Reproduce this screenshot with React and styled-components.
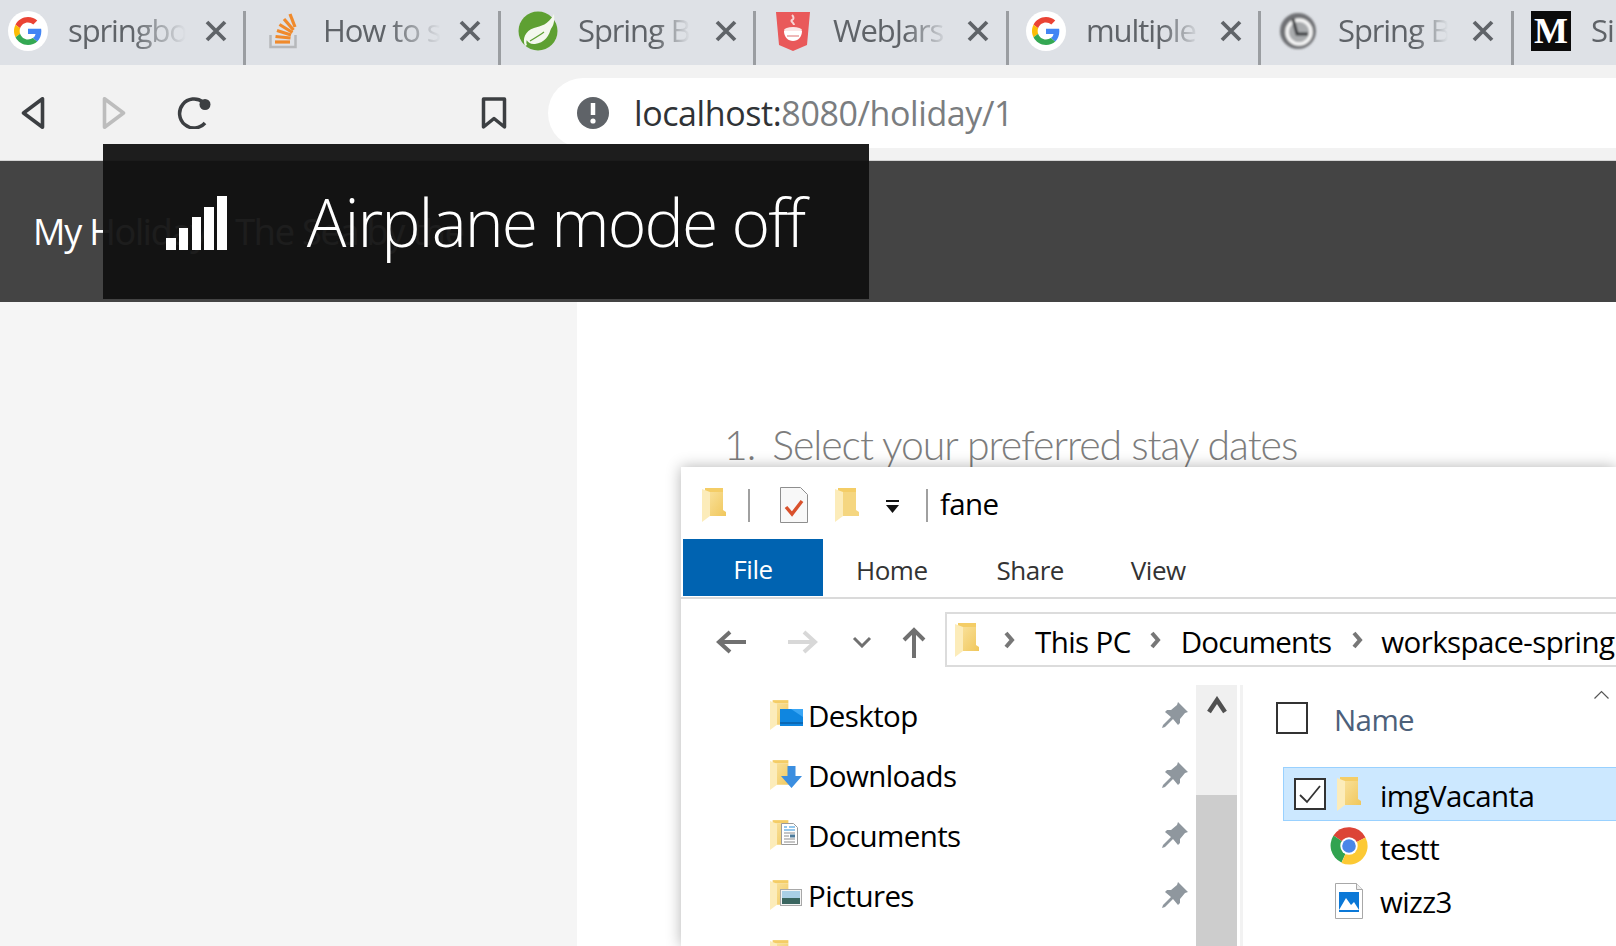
import React from 'react'
import styled, { createGlobalStyle } from 'styled-components'

const Global = createGlobalStyle`
  html, body { margin: 0; padding: 0; background: #fff; }
  body { font-family: "Open Sans", "Liberation Sans", sans-serif; }
  * { box-sizing: border-box; }
`

const Page = styled.div`
  position: relative;
  width: 1616px;
  height: 946px;
  overflow: hidden;
`

/* browser chrome */
const TabStrip = styled.div`
  display: flex;
  height: 65px;
  padding-top: 11px;
  background: #dee1e6;
  overflow: hidden;
`

const Tab = styled.div`
  flex: none;
  display: flex;
  align-items: flex-start;
  width: ${p => p.$w}px;
  padding-left: ${p => p.$pad}px;
  border-right: ${p => (p.$last ? 'none' : '3px solid #9a9da1')};
`

const Favicon = styled.div`
  flex: none;
  width: 40px;
  height: 40px;
  display: flex;
  align-items: center;
  justify-content: center;
`

const TabTitle = styled.div`
  flex: none;
  width: 122px;
  margin-left: 20px;
  margin-top: -1px;
  font-size: 31px;
  line-height: 40px;
  letter-spacing: -1.1px;
  color: #5f6368;
  white-space: nowrap;
  overflow: hidden;
  -webkit-mask-image: linear-gradient(to right, #000 ${p => p.$fade}px, transparent ${p => p.$end}px);
  mask-image: linear-gradient(to right, #000 ${p => p.$fade}px, transparent ${p => p.$end}px);
`

const CloseIcon = styled.svg`
  flex: none;
  width: 22px;
  height: 22px;
  margin-top: 9px;
  margin-left: ${p => p.$ml}px;
`

const MediumMark = styled.div`
  width: 40px;
  height: 40px;
  background: #0b0b0b;
  color: #fff;
  font-family: "Liberation Serif", serif;
  font-weight: 700;
  font-size: 36px;
  line-height: 40px;
  text-align: center;
`

const Toolbar = styled.div`
  display: flex;
  align-items: center;
  height: 95px;
  padding: 13px 0 12px 21px;
  background: #f2f2f2;
`

const ToolIcon = styled.svg`
  flex: none;
  height: 32px;
  width: ${p => p.$w}px;
  margin-left: ${p => p.$ml || 0}px;
`

const AddressBar = styled.div`
  flex: 1;
  display: flex;
  align-items: center;
  height: 70px;
  margin-left: 41px;
  padding-left: 29px;
  background: #fff;
  border-radius: 35px 0 0 35px;
`

const Url = styled.div`
  margin-left: 25px;
  font-size: 34px;
  letter-spacing: -0.4px;
  color: #7a7d80;
  white-space: nowrap;
  span { color: #303336; }
`

/* site behind */
const SiteHeader = styled.div`
  display: flex;
  align-items: center;
  height: 142px;
  padding-left: 33px;
  background: #444;
  border-top: 1px solid #d4d4d4;
`

const Brand = styled.div`
  font-size: 36px;
  font-weight: 500;
  letter-spacing: -1.2px;
  color: #fff;
  white-space: nowrap;
`

const BrandTag = styled.span`
  margin-left: 28px;
`

const Body = styled.div`
  display: flex;
  height: 644px;
`

const Sidebar = styled.div`
  width: 577px;
  background: #f5f5f5;
`

const Content = styled.div`
  flex: 1;
  padding: 118px 0 0 147px;
`

const StepTitle = styled.h2`
  display: flex;
  gap: 17px;
  margin: 0;
  font-family: Lato, sans-serif;
  font-weight: 300;
  font-size: 41px;
  line-height: 50px;
  letter-spacing: -1.05px;
  color: #7d7d7d;
  white-space: nowrap;
`

/* airplane toast */
const Toast = styled.div`
  position: absolute;
  left: 103px;
  top: 144px;
  width: 766px;
  height: 155px;
  display: flex;
  align-items: center;
  padding-left: 63px;
  background: rgba(17, 17, 17, 0.948);
`

const SignalBars = styled.div`
  display: flex;
  align-items: flex-end;
  gap: 3.3px;
  height: 54px;
  margin-top: 3px;
`

const Bar = styled.div`
  width: 9.5px;
  height: ${p => p.$h}px;
  background: #fff;
`

const ToastText = styled.div`
  margin-left: 80px;
  margin-top: -2px;
  font-weight: 300;
  font-size: 66px;
  letter-spacing: -1.9px;
  color: #fff;
  white-space: nowrap;
`

/* explorer window */
const Explorer = styled.div`
  position: absolute;
  left: 681px;
  top: 467px;
  right: 0;
  bottom: 0;
  background: #fff;
  box-shadow: 0 0 14px rgba(0, 0, 0, 0.3);
  overflow: hidden;
  font-size: 29.5px;
  letter-spacing: -0.6px;
  color: #000;
`

const TitleBar = styled.div`
  display: flex;
  align-items: center;
  height: 72px;
  padding: 4px 0 0 21px;
`

const TitleSep = styled.div`
  flex: none;
  width: 2px;
  height: 33px;
  margin-left: ${p => p.$ml}px;
  background: #a0a0a0;
`

const TitleGlyph = styled.svg`
  flex: none;
  margin-left: ${p => p.$ml || 0}px;
  margin-top: ${p => p.$mt || 0}px;
`

const WindowName = styled.div`
  margin-left: 12px;
  margin-top: -3px;
`

const RibbonTabs = styled.div`
  display: flex;
  height: 60px;
  padding-left: 2px;
  border-bottom: 2px solid #dadada;
`

const FileTab = styled.div`
  width: 140px;
  height: 57px;
  background: #0063b1;
  color: #fff;
  font-size: 26px;
  letter-spacing: -0.4px;
  line-height: 61px;
  text-align: center;
`

const RibbonTab = styled.div`
  margin-left: ${p => p.$ml}px;
  font-size: 26px;
  letter-spacing: -0.5px;
  line-height: 62px;
  color: #333;
`

const NavBar = styled.div`
  display: flex;
  align-items: center;
  height: 68px;
  padding: 13px 0 0 35px;
`

const ArrowGroup = styled.div`
  flex: none;
  display: flex;
  align-items: center;
  padding-top: 5px;
`

const NavIcon = styled.svg`
  flex: none;
  margin-left: ${p => p.$ml || 0}px;
`

const PathBox = styled.div`
  flex: 1;
  display: flex;
  align-items: center;
  height: 55px;
  margin-left: 19px;
  padding-left: 8px;
  border: 2px solid #dcdcdc;
  border-right: none;
  white-space: nowrap;
`

const Crumb = styled.span`
  margin-left: ${p => p.$ml}px;
  padding-top: 4px;
  letter-spacing: ${p => p.$ls || -0.6}px;
`

const Panes = styled.div`
  display: flex;
  height: 300px;
  margin-top: 18px;
`

const NavPane = styled.div`
  flex: none;
  width: 515px;
  padding-left: 89px;
`

const NavRow = styled.div`
  display: flex;
  align-items: center;
  height: 60px;
  position: relative;
`

const NavLabel = styled.div`
  flex: 1;
  margin-left: 17px;
`

const PinIcon = styled.svg`
  flex: none;
  margin-right: 8px;
`

const Badge = styled.div`
  position: absolute;
  left: ${p => p.$x}px;
  top: ${p => p.$y}px;
  display: flex;
`

const ScrollTrack = styled.div`
  flex: none;
  width: 41px;
  background: #f0f0f0;
  display: flex;
  flex-direction: column;
`

const ScrollUp = styled.div`
  height: 110px;
  display: flex;
  justify-content: center;
  padding-top: 11px;
`

const ScrollThumb = styled.div`
  flex: 1;
  background: #cdcdcd;
`

const Divider = styled.div`
  flex: none;
  width: 3px;
  margin-left: 3px;
  background: #f2f2f2;
`

const FilePane = styled.div`
  flex: 1;
  position: relative;
  padding-top: 17px;
`

const Check = styled.div`
  flex: none;
  display: flex;
  align-items: center;
  justify-content: center;
  width: 32px;
  height: 32px;
  background: #fff;
  border: 2px solid #333;
`

const ListHeader = styled.div`
  display: flex;
  align-items: center;
  height: 32px;
  padding-left: 33px;
`

const HeaderLabel = styled.div`
  margin-left: 26px;
  margin-top: 2px;
  color: #4c607a;
`

const SortCaret = styled.svg`
  position: absolute;
  right: 7px;
  top: 5px;
`

const FileRow = styled.div`
  display: flex;
  align-items: center;
  height: ${p => (p.$selected ? 54 : 53)}px;
  margin-left: 40px;
  padding-left: 10px;
  margin-top: ${p => (p.$selected ? 33 : 0)}px;
  background: ${p => (p.$selected ? '#cce8ff' : 'transparent')};
  border: 1px solid ${p => (p.$selected ? '#99d1ff' : 'transparent')};
  border-right: none;
`

const FileIcon = styled.div`
  flex: none;
  width: 38px;
  margin-left: ${p => p.$ml}px;
  margin-top: ${p => p.$mt || 0}px;
  display: flex;
  justify-content: center;
`

const FileLabel = styled.div`
  margin-left: 12px;
  margin-top: 2px;
`

const GoogleG = () => (
  <svg width="40" height="40" viewBox="0 0 40 40">
    <circle cx="20" cy="20" r="20" fill="#fff" />
    <g transform="translate(6 6) scale(0.583)">
      <path fill="#EA4335" d="M24 9.5c3.5 0 6.7 1.3 9.1 3.5l6.8-6.8C35.8 2.400 30.300 0 24 0 14.600 0 6.500 5.400 2.600 13.200l7.900 6.200C12.400 13.600 17.700 9.500 24 9.500z" />
      <path fill="#4285F4" d="M46.900 24.500c0-1.600-.1-3.100-.4-4.500H24v9h12.900c-.6 3-2.200 5.500-4.700 7.200l7.700 6c4.500-4.200 7-10.300 7-17.700z" />
      <path fill="#FBBC05" d="M10.500 28.600c-.5-1.400-.8-3-.8-4.600s.3-3.200.8-4.600l-7.900-6.200C.9 16.500 0 20.100 0 24s.9 7.500 2.600 10.800l7.900-6.200z" />
      <path fill="#34A853" d="M24 48c6.500 0 11.900-2.100 15.900-5.800l-7.700-6c-2.200 1.400-4.900 2.300-8.200 2.300-6.300 0-11.600-4.100-13.500-9.900l-7.900 6.200C6.500 42.600 14.600 48 24 48z" />
    </g>
  </svg>
)

const StackIcon = () => (
  <svg width="28" height="36" viewBox="0 0 28 36">
    <path d="M1.500 22v12h25V22" fill="none" stroke="#b6b8bb" strokeWidth="2.500" />
    <g stroke="#f08a2c" strokeWidth="3.200">
      <path d="M6 29h15" />
      <path d="M6.500 23.500l15 1.500" />
      <path d="M8 17.500l14 4.500" />
      <path d="M10.500 11.500l13 8" />
      <path d="M15 6l9.500 11" />
      <path d="M21 1l5 13" />
    </g>
  </svg>
)

const SpringLeaf = () => (
  <svg width="40" height="40" viewBox="0 0 40 40">
    <circle cx="20" cy="20" r="19.500" fill="#5ea032" />
    <path d="M36 3c1 8-1 13-4 16-6 6-14 1-21 7-3 3-3 6-2 8l-2 1c-3-7 0-15 9-18 7-2 14-3 20-14z" fill="#f4f8ee" />
    <path d="M8 28c6-7 14-9 25-12-1 9-7 16-16 17-4 .5-7-1-9-5z" fill="#f4f8ee" />
    <path d="M12 30c5-3 10-6 14-9" stroke="#5ea032" strokeWidth="1.200" fill="none" />
  </svg>
)

const WebJarsIcon = () => (
  <svg width="36" height="40" viewBox="0 0 36 40">
    <path d="M1 1h34l-3 33-14 6-14-6z" fill="#e9595a" />
    <path d="M17 4c2 2 2 4 0 5s2 3 2 5" stroke="#f8d5d5" strokeWidth="2" fill="none" />
    <ellipse cx="18" cy="19" rx="9" ry="3" fill="#fbe5e5" />
    <path d="M9 20h18c0 6-4 10-9 10s-9-4-9-10z" fill="#fff" />
    <path d="M12 25h12" stroke="#e9a0a0" strokeWidth="1.500" />
  </svg>
)

const BlurredClock = () => (
  <svg width="40" height="40" viewBox="0 0 40 40">
    <defs>
      <filter id="soft"><feGaussianBlur stdDeviation="1.100" /></filter>
    </defs>
    <g filter="url(#soft)">
      <circle cx="20" cy="20" r="18" fill="#6f7174" />
      <circle cx="21" cy="21" r="12" fill="#a9abad" stroke="#f6f6f6" strokeWidth="3.500" />
      <path d="M15 8l4 15h11" fill="none" stroke="#35373a" strokeWidth="3" />
    </g>
  </svg>
)

const Close = ({ ml }) => (
  <CloseIcon $ml={ml} viewBox="0 0 22 22">
    <path d="M2 2l18 18M20 2L2 20" stroke="#5f6368" strokeWidth="3.800" />
  </CloseIcon>
)

const tabs = [
  { w: 246, pad: 8, icon: <GoogleG />, title: 'springboot', fade: 64, end: 118, ml: 15 },
  { w: 255, pad: 17, icon: <StackIcon />, title: 'How to show', fade: 66, end: 118, ml: 14 },
  { w: 255, pad: 17, icon: <SpringLeaf />, title: 'Spring Boot', fade: 78, end: 112, ml: 15 },
  { w: 253, pad: 17, icon: <WebJarsIcon />, title: 'WebJars', fade: 72, end: 116, ml: 12 },
  { w: 252, pad: 17, icon: <GoogleG />, title: 'multiple', fade: 76, end: 114, ml: 12 },
  { w: 253, pad: 17, icon: <BlurredClock />, title: 'Spring Boot', fade: 78, end: 110, ml: 12 },
]

const Folder = ({ w = 24, h = 34 }) => (
  <svg width={w} height={h} viewBox="0 0 24 34">
    <defs>
      <linearGradient id="folderFront" x1="0" y1="0" x2="1" y2="1">
        <stop offset="0" stopColor="#f9e098" />
        <stop offset="1" stopColor="#f0c75c" />
      </linearGradient>
    </defs>
    <path d="M3 0h18v4h-18z" fill="#f4cd66" />
    <path d="M7 4h14v18l3 2v4H7z" fill="url(#folderFront)" />
    <path d="M0 1l8 3v24l-8 6z" fill="#fcecba" />
  </svg>
)

const DesktopBadge = () => (
  <svg width="23" height="17" viewBox="0 0 23 17">
    <rect width="23" height="17" fill="#0f86e0" />
    <path d="M0 14h23" stroke="#0b5fa8" strokeWidth="1.500" />
    <path d="M11 0h12v8z" fill="#3aa6f5" />
  </svg>
)

const DownloadBadge = () => (
  <svg width="21" height="22" viewBox="0 0 21 22">
    <path d="M6.500 0h8v10H21L10.500 22 0 10h6.500z" fill="#3b8ee0" />
  </svg>
)

const DocBadge = () => (
  <svg width="17" height="22" viewBox="0 0 17 22">
    <path d="M.5.500h12l4 4v17H.500z" fill="#fff" stroke="#9a9a9a" />
    <path d="M3 4h3M8 4h6M3 7h11" stroke="#2b8fd8" />
    <path d="M3 10h11M3 13h5M3 16h11M3 19h11" stroke="#8b8b8b" />
    <rect x="9" y="11.500" width="5" height="3" fill="#4c7a9a" />
  </svg>
)

const PictureBadge = () => (
  <svg width="22" height="17" viewBox="0 0 22 17">
    <rect x=".5" y=".5" width="21" height="16" fill="#f4f4f4" stroke="#a8a8a8" />
    <rect x="2" y="2" width="18" height="7" fill="#a9cfe6" />
    <rect x="2" y="9" width="18" height="6" fill="#3a6660" />
  </svg>
)

const Pin = () => (
  <PinIcon width="26" height="26" viewBox="0 0 26 26">
    <path d="M16 0l10 10-3 1-5 6 0 4-2 2-5-6-8 8-3 1 1-3 8-8-6-5 2-2 4 0 6-5z" fill="#8f979e" />
  </PinIcon>
)

const Chevron = ({ ml }) => (
  <NavIcon $ml={ml} width="13" height="18" viewBox="0 0 13 18">
    <path d="M3 2l6 7-6 7" fill="none" stroke="#777" strokeWidth="4" />
  </NavIcon>
)

const navItems = [
  { label: 'Desktop', badge: <DesktopBadge />, x: 10, y: 24 },
  { label: 'Downloads', badge: <DownloadBadge />, x: 11, y: 21 },
  { label: 'Documents', badge: <DocBadge />, x: 11, y: 18 },
  { label: 'Pictures', badge: <PictureBadge />, x: 10, y: 24 },
  { label: 'stagii practice', badge: null },
]

const ChromeIcon = () => (
  <svg width="38" height="38" viewBox="0 0 38 38">
    <path d="M19 19L3.500 8.500A18.500 18.500 0 0 1 35.500 10.500z" fill="#dc4437" />
    <path d="M19 19l-7.500 16.400A18.500 18.500 0 0 1 3.500 8.500z" fill="#31a350" />
    <path d="M19 19l16.500-8.500A18.500 18.500 0 0 1 11.500 35.900z" fill="#fcc934" />
    <circle cx="19" cy="19" r="8.700" fill="#fff" />
    <circle cx="19" cy="19" r="6.800" fill="#4a86e8" />
  </svg>
)

const ImageFile = () => (
  <svg width="28" height="36" viewBox="0 0 28 36">
    <path d="M.5.500h21l6 6v29H.500z" fill="#fff" stroke="#a8a8a8" />
    <path d="M21.500.500v6h6" fill="#eee" stroke="#a8a8a8" />
    <rect x="4" y="9" width="20" height="20" fill="#0b78d7" />
    <path d="M4 27l7-12 5 7 3-3 5 8z" fill="#fff" />
  </svg>
)

export default function App() {
  return (
    <Page>
      <Global />
      <TabStrip>
        {tabs.map((t, i) => (
          <Tab key={i} $w={t.w} $pad={t.pad}>
            <Favicon>{t.icon}</Favicon>
            <TabTitle $fade={t.fade} $end={t.end}>{t.title}</TabTitle>
            <Close ml={t.ml} />
          </Tab>
        ))}
        <Tab $w={104} $pad={17} $last>
          <Favicon><MediumMark>M</MediumMark></Favicon>
          <TabTitle $fade={100} $end={122}>Si</TabTitle>
        </Tab>
      </TabStrip>

      <Toolbar>
        <ToolIcon $w={24} viewBox="0 0 24 32">
          <path d="M21.500 1.800v28.400L2.500 16z" fill="none" stroke="#3c3f42" strokeWidth="3.600" strokeLinejoin="round" />
        </ToolIcon>
        <ToolIcon $w={24} $ml={57} viewBox="0 0 24 32">
          <path d="M2.500 1.800v28.400L21.500 16z" fill="none" stroke="#bdbdbd" strokeWidth="3.600" strokeLinejoin="round" />
        </ToolIcon>
        <ToolIcon $w={36} $ml={50} viewBox="0 0 36 32">
          <path d="M29 26A14.500 14.500 0 1 1 27 5" fill="none" stroke="#3c3f42" strokeWidth="3.500" />
          <circle cx="29" cy="7.500" r="5.500" fill="#3c3f42" />
        </ToolIcon>
        <ToolIcon $w={26} $ml={269} viewBox="0 0 26 32">
          <path d="M2.500 2h21v28L13 21.500 2.500 30z" fill="none" stroke="#3c3f42" strokeWidth="3.500" strokeLinejoin="round" />
        </ToolIcon>
        <AddressBar>
          <svg width="32" height="32" viewBox="0 0 32 32">
            <circle cx="16" cy="16" r="16" fill="#5f6368" />
            <path d="M16 6v12" stroke="#fff" strokeWidth="4.500" />
            <circle cx="16" cy="24" r="2.600" fill="#fff" />
          </svg>
          <Url><span>localhost:</span>8080/holiday/1</Url>
        </AddressBar>
      </Toolbar>

      <SiteHeader>
        <Brand>My Holiday<BrandTag>The Sea by the</BrandTag></Brand>
      </SiteHeader>

      <Body>
        <Sidebar />
        <Content>
          <StepTitle>
            <span>1.</span>
            <span>Select your preferred stay dates</span>
          </StepTitle>
        </Content>
      </Body>

      <Toast>
        <SignalBars>
          {[12, 22, 33, 43, 54].map(h => <Bar key={h} $h={h} />)}
        </SignalBars>
        <ToastText>Airplane mode off</ToastText>
      </Toast>

      <Explorer>
        <TitleBar>
          <Folder />
          <TitleSep $ml={22} />
          <TitleGlyph $ml={30} width="28" height="36" viewBox="0 0 28 36">
            <path d="M.5.500h20l7 7v28H.500z" fill="#f8f8f8" stroke="#8e8e8e" />
            <path d="M6 20l6 7 10-13" fill="none" stroke="#d9512c" strokeWidth="3.400" />
          </TitleGlyph>
          <TitleGlyph $ml={27} width="24" height="34" viewBox="0 0 24 34">
            <path d="M3 0h18v4h-18z" fill="#f4cd66" />
            <path d="M7 4h14v18l3 2v4H7z" fill="#f5d680" />
            <path d="M0 1l8 3v24l-8 6z" fill="#fcecba" />
          </TitleGlyph>
          <TitleGlyph $ml={27} $mt={4} width="13" height="14" viewBox="0 0 13 14">
            <path d="M0 1h13" stroke="#111" strokeWidth="2" />
            <path d="M0 5h13l-6.500 8z" fill="#111" />
          </TitleGlyph>
          <TitleSep $ml={27} />
          <WindowName>fane</WindowName>
        </TitleBar>

        <RibbonTabs>
          <FileTab>File</FileTab>
          <RibbonTab $ml={33}>Home</RibbonTab>
          <RibbonTab $ml={69}>Share</RibbonTab>
          <RibbonTab $ml={67}>View</RibbonTab>
        </RibbonTabs>

        <NavBar>
          <ArrowGroup>
            <NavIcon width="30" height="24" viewBox="0 0 30 24">
              <path d="M30 12H5M14 2L3 12l11 10" fill="none" stroke="#707070" strokeWidth="4" />
            </NavIcon>
            <NavIcon $ml={42} width="30" height="24" viewBox="0 0 30 24">
              <path d="M0 12h25M16 2l11 10-11 10" fill="none" stroke="#d8d8d8" strokeWidth="4" />
            </NavIcon>
            <NavIcon $ml={34} width="20" height="12" viewBox="0 0 20 12">
              <path d="M2 2l8 8 8-8" fill="none" stroke="#707070" strokeWidth="3" />
            </NavIcon>
            <NavIcon $ml={30} width="24" height="31" viewBox="0 0 24 31">
              <path d="M12 31V4M2 13L12 3l10 10" fill="none" stroke="#707070" strokeWidth="4" />
            </NavIcon>
          </ArrowGroup>
          <PathBox>
            <Folder />
            <Chevron ml={24} />
            <Crumb $ml={19}>This PC</Crumb>
            <Chevron ml={18} />
            <Crumb $ml={19} $ls={-0.8}>Documents</Crumb>
            <Chevron ml={20} />
            <Crumb $ml={17}>workspace-spring</Crumb>
          </PathBox>
        </NavBar>

        <Panes>
          <NavPane>
            {navItems.map(item => (
              <NavRow key={item.label}>
                <Folder w={21} h={34} />
                {item.badge && <Badge $x={item.x} $y={item.y}>{item.badge}</Badge>}
                <NavLabel>{item.label}</NavLabel>
                {item.badge && <Pin />}
              </NavRow>
            ))}
          </NavPane>
          <ScrollTrack>
            <ScrollUp>
              <svg width="20" height="18" viewBox="0 0 20 18">
                <path d="M2 16L10 4l8 12" fill="none" stroke="#505050" strokeWidth="4.500" />
              </svg>
            </ScrollUp>
            <ScrollThumb />
          </ScrollTrack>
          <Divider />
          <FilePane>
            <SortCaret width="15" height="9" viewBox="0 0 15 9">
              <path d="M.5 8.500l7-7 7 7" fill="none" stroke="#555" strokeWidth="1.200" />
            </SortCaret>
            <ListHeader>
              <Check />
              <HeaderLabel>Name</HeaderLabel>
            </ListHeader>
            <FileRow $selected>
              <Check>
                <svg width="24" height="20" viewBox="0 0 24 20">
                  <path d="M2 11l7 7L22 2" fill="none" stroke="#333" strokeWidth="1.800" />
                </svg>
              </Check>
              <FileIcon $ml={4}><Folder /></FileIcon>
              <FileLabel>imgVacanta</FileLabel>
            </FileRow>
            <FileRow>
              <FileIcon $ml={36} $mt={-3}><ChromeIcon /></FileIcon>
              <FileLabel>testt</FileLabel>
            </FileRow>
            <FileRow>
              <FileIcon $ml={36}><ImageFile /></FileIcon>
              <FileLabel>wizz3</FileLabel>
            </FileRow>
          </FilePane>
        </Panes>
      </Explorer>
    </Page>
  )
}
